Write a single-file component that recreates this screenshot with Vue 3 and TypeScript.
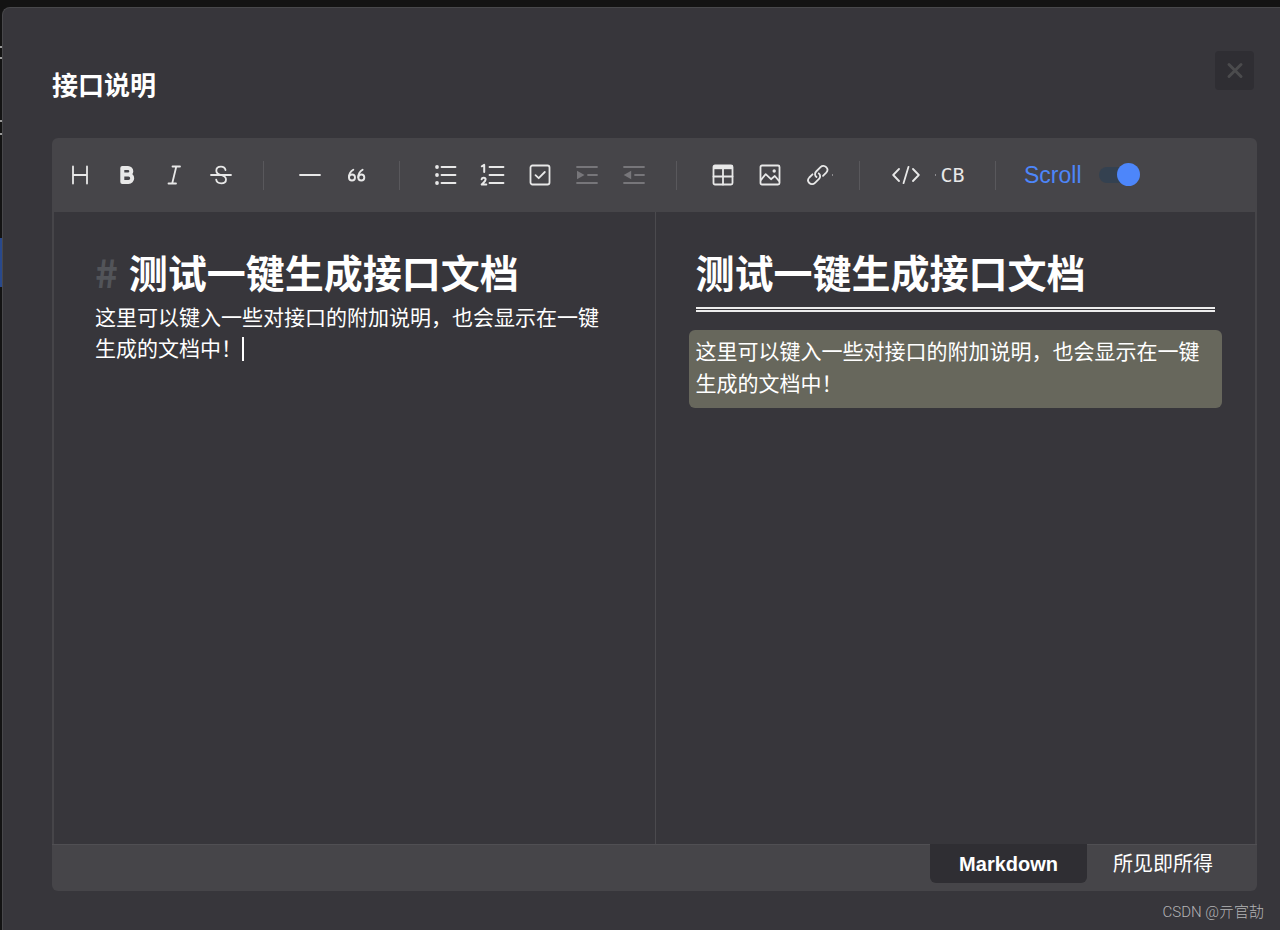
<script setup lang="ts">
import { ref } from 'vue'

interface Tool {
  name: string
  label: string
  disabled?: boolean
}

const groups: Tool[][] = [
  [
    { name: 'heading', label: '标题' },
    { name: 'bold', label: '粗体' },
    { name: 'italic', label: '斜体' },
    { name: 'strike', label: '删除线' },
  ],
  [
    { name: 'line', label: '分割线' },
    { name: 'quote', label: '引用' },
  ],
  [
    { name: 'ul', label: '无序列表' },
    { name: 'ol', label: '有序列表' },
    { name: 'task', label: '任务' },
    { name: 'indent', label: '增加缩进', disabled: true },
    { name: 'outdent', label: '减少缩进', disabled: true },
  ],
  [
    { name: 'table', label: '表格' },
    { name: 'image', label: '图片' },
    { name: 'link', label: '链接' },
  ],
  [
    { name: 'code', label: '行内代码' },
    { name: 'codeblock', label: '代码块' },
  ],
]

const title = '测试一键生成接口文档'
const body = '这里可以键入一些对接口的附加说明，也会显示在一键生成的文档中！'
const syncScroll = ref(true)
const mode = ref<'markdown' | 'wysiwyg'>('markdown')
</script>

<template>
  <div class="page">
    <div class="behind" aria-hidden="true">
      <i class="mark m1"></i><i class="mark m2"></i><i class="mark m3"></i><i class="mark m4"></i>
      <i class="selected"></i>
    </div>
    <section class="dialog" role="dialog" aria-labelledby="dialog-title">
      <header class="head">
        <h2 id="dialog-title">接口说明</h2>
        <button class="close" type="button" aria-label="关闭">
          <svg width="18" height="18" viewBox="0 0 18 18"><path d="M3 2.500 15 14.500M15 2.500 3 14.500" /></svg>
        </button>
      </header>

      <div class="editor">
        <div class="toolbar" role="toolbar">
          <template v-for="(group, g) in groups" :key="g">
            <div class="group">
              <button
                v-for="tool in group"
                :key="tool.name"
                type="button"
                :class="['tool', tool.name]"
                :aria-label="tool.label"
                :disabled="tool.disabled"
              >
                <span v-if="tool.name === 'codeblock'" class="cb">CB</span>
                <svg v-else width="28" height="28" viewBox="0 0 28 28">
                  <g v-if="tool.name === 'heading'"><path d="M7 5.500V22.500M21 5.500V22.500M7 14H21" /></g>
                  <g v-else-if="tool.name === 'bold'" class="heavy">
                    <path d="M9.300 7V21H15.500A3.700 3.700 0 0 0 15.500 13.600H9.300M15 13.600A3.300 3.300 0 0 0 15 7H9.300" />
                  </g>
                  <g v-else-if="tool.name === 'italic'"><path d="M12.500 5.500H20M8.500 22.500H16M16.300 5.500 12.200 22.500" /></g>
                  <g v-else-if="tool.name === 'strike'">
                    <path d="M4 14H24M18.500 9C18 6.700 16.300 5.700 14 5.700C11.200 5.700 9.300 7.400 9.300 9.700C9.300 12 11 13.200 14 14C17.300 14.900 19 16 19 18.400C19 20.900 17 22.300 14.200 22.300C11.500 22.300 9.600 21.200 9.200 18.700" />
                  </g>
                  <g v-else-if="tool.name === 'line'"><path d="M4 14H24" /></g>
                  <g v-else-if="tool.name === 'quote'" class="quote">
                    <path d="M10.300 8.800C7.300 10.600 6 13.600 6 16.200" /><circle cx="9" cy="16.500" r="3" />
                    <path d="M19.600 8.800C16.600 10.600 15.300 13.600 15.300 16.200" /><circle cx="18.300" cy="16.500" r="3" />
                  </g>
                  <g v-else-if="tool.name === 'ul'">
                    <path d="M9.500 6H23.500M9.500 14H23.500M9.500 22H23.500" />
                    <circle class="solid" cx="5" cy="6" r="1.900" /><circle class="solid" cx="5" cy="14" r="1.900" /><circle class="solid" cx="5" cy="22" r="1.900" />
                  </g>
                  <g v-else-if="tool.name === 'ol'">
                    <path d="M10.500 6H24.500M10.500 14H24.500M10.500 22H24.500" />
                    <path class="thick" d="M2.800 5.300 5.200 3.900V11M2.600 18.200C3 16.300 6.600 16.200 6.600 18.500C6.600 20.300 4.200 21.700 2.700 23.400H7.300" />
                  </g>
                  <g v-else-if="tool.name === 'task'">
                    <rect x="4.500" y="4.500" width="19" height="19" rx="2" /><path d="M9.500 14.200 12.700 17.200 18.800 11" />
                  </g>
                  <g v-else-if="tool.name === 'indent'">
                    <path d="M4 6H24M15 14H24M4 22H24" /><path class="solid" d="M4 9.800 11.500 14 4 18.200Z" />
                  </g>
                  <g v-else-if="tool.name === 'outdent'">
                    <path d="M4 6H24M15 14H24M4 22H24" /><path class="solid" d="M11.200 9.800 3.700 14 11.200 18.200Z" />
                  </g>
                  <g v-else-if="tool.name === 'table'">
                    <rect x="4.500" y="4.500" width="19" height="19" rx="1.500" /><path d="M4.500 15.500H23.500M14 8V23.500" /><path class="solid" d="M4.500 4.500H23.500V8.200H4.500Z" />
                  </g>
                  <g v-else-if="tool.name === 'image'">
                    <rect x="4.500" y="4.500" width="19" height="19" rx="1.500" />
                    <path d="M5 18.800 9.700 13.200 15 18.200 18.800 15 23 19.800" /><circle class="solid" cx="18.200" cy="10" r="1.700" />
                  </g>
                  <g v-else-if="tool.name === 'link'">
                    <path d="M13.500 16C11.500 14.300 11.700 12 13.200 10.500L17.500 6.200C19.200 4.500 21.700 4.700 23.200 6.200C24.700 7.700 24.800 10 23.200 11.700L20 14.900" />
                    <path d="M15.700 12.400C17.700 14.100 17.500 16.400 16 17.900L12 21.900C10.300 23.600 7.800 23.500 6.300 22C4.800 20.500 4.700 18.200 6.300 16.500L9.500 13.300" />
                  </g>
                  <g v-else-if="tool.name === 'code'"><path d="M7 8 1.200 14 7 20M21 8 26.800 14 21 20M16.500 5.800 11.500 22.200" /></g>
                </svg>
              </button>
            </div>
            <span class="divider"></span>
          </template>
          <label class="scroll">
            <span>Scroll</span>
            <input v-model="syncScroll" type="checkbox" role="switch" />
          </label>
        </div>

        <div class="panes">
          <div class="pane source" contenteditable="true" role="textbox" aria-multiline="true" aria-label="Markdown" spellcheck="false">
            <div class="h1"><span class="hash">#</span> {{ title }}</div>
            <div class="para">{{ body }}<span class="caret"></span></div>
          </div>
          <article class="pane preview">
            <h1 class="h1">{{ title }}</h1>
            <p class="para">{{ body }}</p>
          </article>
        </div>

        <footer class="modes">
          <button type="button" :class="['tab', { active: mode === 'markdown' }]" @click="mode = 'markdown'">Markdown</button>
          <button type="button" :class="['tab', { active: mode === 'wysiwyg' }]" @click="mode = 'wysiwyg'">所见即所得</button>
        </footer>
      </div>
      <span class="watermark">CSDN @亓官劼</span>
    </section>
  </div>
</template>

<style>
body {
  background: #131313;
}
</style>

<style scoped>
.page {
  position: relative;
  display: flex;
  box-sizing: border-box;
  min-height: 100vh;
  padding: 7px 0 0 2px;
  overflow: hidden;
  background: #131313;
  color: #fff;
  font-family: "Liberation Sans", "Noto Sans CJK SC", sans-serif;
}
.behind i {
  position: absolute;
  left: 0;
  width: 2px;
  height: 2px;
  background: #9a9a9a;
}
.behind .m1 { top: 46px; }
.behind .m2 { top: 57px; }
.behind .m3 { top: 120px; }
.behind .m4 { top: 133px; }
.behind .selected {
  top: 238px;
  height: 49px;
  background: #29498c;
}
.dialog {
  position: relative;
  flex: 1;
  min-width: 0;
  display: flex;
  flex-direction: column;
  box-sizing: border-box;
  padding: 43px 23px 39px 49px;
  border: 1px solid #48484b;
  border-width: 1px 0 0 1px;
  border-radius: 8px 0 0 0;
  background: #37363b;
}
.head {
  display: flex;
  align-items: flex-start;
  justify-content: space-between;
  padding: 0 3px 32px 0;
}
.head h2 {
  margin: 16px 0 0;
  font-size: 26px;
  line-height: 39px;
  font-weight: 700;
}
.close {
  display: flex;
  align-items: center;
  justify-content: center;
  width: 39px;
  height: 39px;
  padding: 0;
  border: 0;
  border-radius: 4px;
  background: #2f2e33;
}
.close svg {
  fill: none;
  stroke: #4b4b4d;
  stroke-width: 3;
  stroke-linecap: round;
}
.editor {
  flex: 1;
  display: flex;
  flex-direction: column;
  border-radius: 6px;
  background: #464549;
}
.toolbar {
  display: flex;
  align-items: center;
  height: 74px;
  padding-left: 4px;
}
.group {
  display: flex;
}
.tool {
  position: relative;
  display: flex;
  align-items: center;
  justify-content: center;
  width: 47px;
  height: 40px;
  padding: 0;
  border: 0;
  background: none;
  color: #e8e8e8;
}
.tool:disabled {
  color: #77767a;
}
.tool svg {
  fill: none;
  stroke: currentColor;
  stroke-width: 1.8;
  stroke-linecap: round;
  stroke-linejoin: round;
}
.tool .thick {
  stroke-width: 2;
}
.tool .heavy {
  stroke-width: 4;
}
.tool .quote {
  stroke-width: 1.9;
}
.tool .solid {
  fill: currentColor;
  stroke-width: 0;
}
.link::after,
.codeblock::before {
  content: "";
  position: absolute;
  top: 19px;
  width: 1px;
  height: 2px;
  background: #8c8b8f;
}
.link::after {
  right: 7px;
}
.codeblock::before {
  left: 6px;
}
.cb {
  font-family: "DejaVu Sans Mono", monospace;
  font-size: 20px;
  line-height: 28px;
}
.divider {
  width: 1px;
  height: 29px;
  margin: 0 22px 0 19px;
  background: #59585c;
}
.scroll {
  display: flex;
  align-items: center;
  gap: 17px;
  padding-left: 6px;
  color: #4d86fa;
  font-size: 23px;
  line-height: 28px;
}
.scroll input {
  position: relative;
  appearance: none;
  width: 40px;
  height: 16px;
  margin: 0;
  border-radius: 8px;
  background: #344150;
}
.scroll input::after {
  content: "";
  position: absolute;
  top: -4px;
  left: 0;
  width: 23px;
  height: 23px;
  border-radius: 50%;
  background: #8a8a8e;
}
.scroll input:checked::after {
  left: 18px;
  background: #4d86fa;
}
.panes {
  flex: 1;
  display: grid;
  grid-template-columns: 1fr 1fr;
  margin: 0 2px;
  background: #37363b;
}
.pane {
  min-width: 0;
  padding: 35px 40px 40px;
  outline: none;
}
.source {
  padding-left: 41px;
}
.preview {
  border-left: 1px solid #4b4a4e;
}
.h1 {
  margin: 0;
  font-size: 39px;
  line-height: 55px;
  font-weight: 700;
}
.hash {
  color: #525459;
  font-family: "Noto Sans CJK SC", sans-serif;
  line-height: 1;
}
.para {
  margin: 0;
  font-size: 21px;
  line-height: 31px;
}
.caret {
  display: inline-block;
  width: 2px;
  height: 24px;
  vertical-align: -5px;
  background: #fff;
}
.preview .h1 {
  padding-bottom: 5px;
  border-bottom: 5px double #eee;
  margin-bottom: 18px;
}
.preview .para {
  margin: 0 -7px;
  padding: 6px 7px 8px;
  border-radius: 6px;
  line-height: 32px;
  background: #67675c;
}
.modes {
  display: flex;
  align-items: flex-start;
  justify-content: flex-end;
  height: 47px;
  padding-right: 18px;
  box-sizing: border-box;
  box-shadow: inset 0 1px #504f53;
}
.tab {
  height: 39px;
  padding: 2px 26px 0;
  border: 0;
  border-radius: 0 0 6px 6px;
  background: none;
  color: #fff;
  font: 20px/37px "Liberation Sans", "Noto Sans CJK SC", sans-serif;
}
.tab.active {
  padding: 2px 29px 0;
  background: #2f2e33;
  font-weight: 700;
}
.watermark {
  position: absolute;
  right: 16px;
  bottom: 7px;
  color: #b4b4b6;
  font: 15px/22px Roboto, "Noto Sans CJK SC", sans-serif;
  font-weight: 300;
}
</style>
